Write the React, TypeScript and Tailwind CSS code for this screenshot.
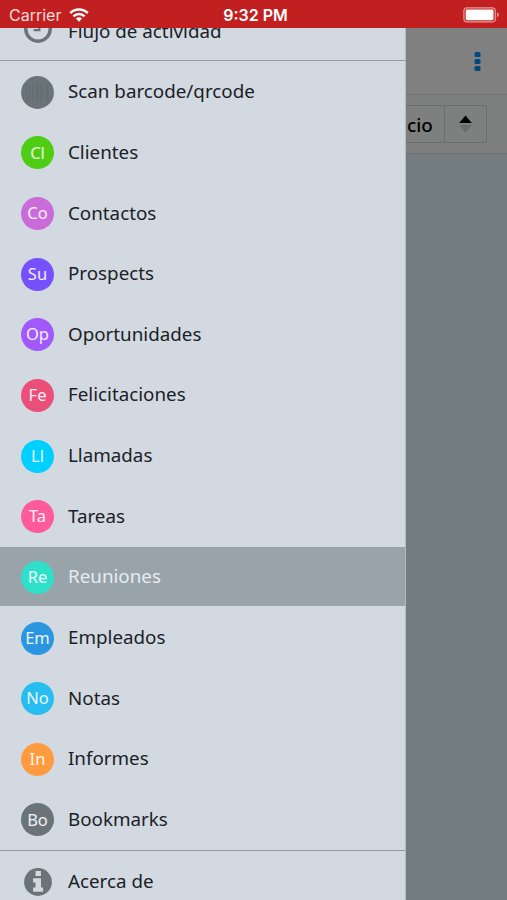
import React from "react";
import clsx from "clsx";

interface MenuItem {
  label: string;
  short: string;
  color: string;
  active?: boolean;
}

const MODULES: MenuItem[] = [
  { label: "Clientes", short: "Cl", color: "bg-[#4fcd12]" },
  { label: "Contactos", short: "Co", color: "bg-[#cb6bd9]" },
  { label: "Prospects", short: "Su", color: "bg-[#7650fb]" },
  { label: "Oportunidades", short: "Op", color: "bg-[#a259fc]" },
  { label: "Felicitaciones", short: "Fe", color: "bg-[#e94f78]" },
  { label: "Llamadas", short: "Ll", color: "bg-[#00d0ff]" },
  { label: "Tareas", short: "Ta", color: "bg-[#ff5a9c]" },
  { label: "Reuniones", short: "Re", color: "bg-[#2ee0ca]", active: true },
  { label: "Empleados", short: "Em", color: "bg-[#2b96e0]" },
  { label: "Notas", short: "No", color: "bg-[#28bdf1]" },
  { label: "Informes", short: "In", color: "bg-[#ff9a3e]" },
  { label: "Bookmarks", short: "Bo", color: "bg-[#6a7478]" },
];

export default function App() {
  return (
    <div className="flex h-[900px] w-[507px] flex-col overflow-hidden bg-[#737d80] font-['Noto_Sans',sans-serif]">
      <StatusBar />
      <div className="flex min-h-0 flex-1">
        <Drawer />
        <PageBehind />
      </div>
    </div>
  );
}

function StatusBar() {
  return (
    <header className="z-10 grid h-[28px] shrink-0 grid-cols-3 items-center bg-[#c22020] pt-[2px] pr-[7px] pl-[9px] font-[Inter,sans-serif] text-white">
      <div className="flex items-center gap-[8px]">
        <span className="text-[16px] leading-none text-[#fbdcdc]">Carrier</span>
        <WifiIcon />
      </div>
      <span className="pl-[2px] text-center text-[16px] leading-none font-semibold whitespace-nowrap">9:32 PM</span>
      <div className="flex justify-end">
        <BatteryIcon />
      </div>
    </header>
  );
}

function Drawer() {
  return (
    <nav className="w-[406px] shrink-0 overflow-hidden border-r border-[#b3bbc1] bg-[#d2d9e0]">
      {/* list is scrolled, the first row sits partly under the status bar */}
      <ul className="-mt-[27.4px]">
        <MenuRow label="Flujo de actividad" icon={<ClockIcon />} divider="bottom" />
        <MenuRow label="Scan barcode/qrcode" icon={<BarcodeIcon />} />
        {MODULES.map((item) => (
          <MenuRow
            key={item.short}
            label={item.label}
            active={item.active}
            icon={
              <span className={clsx("flex size-[33px] items-center justify-center rounded-full text-[16.5px] leading-none text-white/90", item.color)}>
                {item.short}
              </span>
            }
          />
        ))}
        <MenuRow label="Acerca de" icon={<InfoIcon />} divider="top" />
      </ul>
    </nav>
  );
}

interface MenuRowProps {
  label: string;
  icon: React.ReactNode;
  active?: boolean;
  divider?: "top" | "bottom";
}

function MenuRow({ label, icon, active, divider }: MenuRowProps) {
  return (
    <li
      className={clsx(
        "flex h-[60.67px] items-center bg-clip-padding pl-[21px]",
        divider === "top" ? "border-t" : "border-b",
        divider ? "border-[#949ca2]" : "border-transparent",
        active ? "bg-[#99a3aa] text-[#e6ebf0]" : "text-[#1b2127]"
      )}
    >
      <span className="flex w-[33px] shrink-0 justify-center pt-[2px]">{icon}</span>
      <span className="ml-[14px] pt-px text-[18.8px] leading-none whitespace-nowrap">{label}</span>
    </li>
  );
}

/** Dimmed page that stays visible to the right of the drawer */
function PageBehind() {
  return (
    <main className="flex min-w-0 flex-1 flex-col">
      <div className="flex h-[67px] items-center justify-end border-b border-[#6d7070] bg-[#808080] pr-[26px]">
        <svg width="7" height="21" viewBox="0 0 7 21" fill="#05487a">
          <rect x="0.5" y="0.9" width="6" height="5.2" rx="1.5" />
          <rect x="0.5" y="7.9" width="6" height="5.2" rx="1.5" />
          <rect x="0.5" y="14.9" width="6" height="5.2" rx="1.5" />
        </svg>
      </div>
      <div className="flex h-[59px] items-center border-b border-[#687276] bg-[#7e7f7f] pr-[20px]">
        <div className="flex h-[38px] flex-1 border border-l-0 border-[#6b6e6e]">
          <div className="flex flex-1 items-center border-r border-[#6b6e6e] pt-[2px] pl-px text-[18.8px] leading-none font-medium text-black">
            cio
          </div>
          <div className="flex w-[41px] items-center justify-center">
            <svg width="13" height="18" viewBox="0 0 13 18">
              <path d="M6.5 0.5 12.9 8H0.1Z" fill="#000" />
              <path d="M6.5 17.5 12.9 10H0.1Z" fill="#6a6b6b" />
            </svg>
          </div>
        </div>
      </div>
    </main>
  );
}

// ── Icons ─────────────────────────────────────────────────────────────────

function WifiIcon() {
  return (
    <svg width="20" height="14" viewBox="0 0 20 14" fill="none" stroke="#fff" strokeWidth="2.4">
      <path d="M1.2 5.1a12.5 12.5 0 0 1 17.6 0" />
      <path d="M4.4 8.3a8 8 0 0 1 11.2 0" />
      <path d="M10 13.8 6.9 10.6a4.5 4.5 0 0 1 6.2 0Z" fill="#fff" stroke="none" />
    </svg>
  );
}

function BatteryIcon() {
  return (
    <svg width="37" height="16" viewBox="0 0 37 16">
      <rect x="0.9" y="0.9" width="31.4" height="14" rx="3.2" fill="none" stroke="#e99a9a" strokeWidth="1.2" />
      <rect x="2.7" y="2.6" width="27.8" height="10.6" rx="1.4" fill="#fff" />
      <path d="M34 5.6c2.4.6 2.4 4 0 4.6Z" fill="#e99a9a" />
    </svg>
  );
}

function ClockIcon() {
  return (
    <svg className="mb-[4px]" width="28" height="28" viewBox="0 0 28 28" fill="none" stroke="#6a7377">
      <circle cx="14" cy="14" r="12.2" strokeWidth="3.4" />
      <path d="M15.3 6.5v8.6H9.6" strokeWidth="2.2" />
    </svg>
  );
}

function BarcodeIcon() {
  return (
    <svg width="33" height="33" viewBox="0 0 33 33">
      <circle cx="16.5" cy="16.5" r="16.4" fill="#6a7377" />
      <g fill="#636c70">
        <rect x="5" y="8" width="1.2" height="17" />
        <rect x="8" y="8" width="0.8" height="17" />
        <rect x="11" y="8" width="0.8" height="17" />
        <rect x="15.5" y="7.5" width="1.4" height="18" />
        <rect x="18.8" y="7.5" width="1" height="18" />
        <rect x="21" y="7.5" width="0.8" height="18" />
        <rect x="25.8" y="7.5" width="1.4" height="18" />
      </g>
    </svg>
  );
}

function InfoIcon() {
  return (
    <svg width="28" height="28" viewBox="0 0 28 28">
      <circle cx="14" cy="14" r="13.9" fill="#6a7377" />
      <path
        d="M11.5 3h5.4v5h-5.4ZM9.1 10.2h7.9v9.2h2.1v4.3H9.1v-4.3h2.4v-4.9H9.1Z"
        fill="#d2d9e0"
      />
    </svg>
  );
}
